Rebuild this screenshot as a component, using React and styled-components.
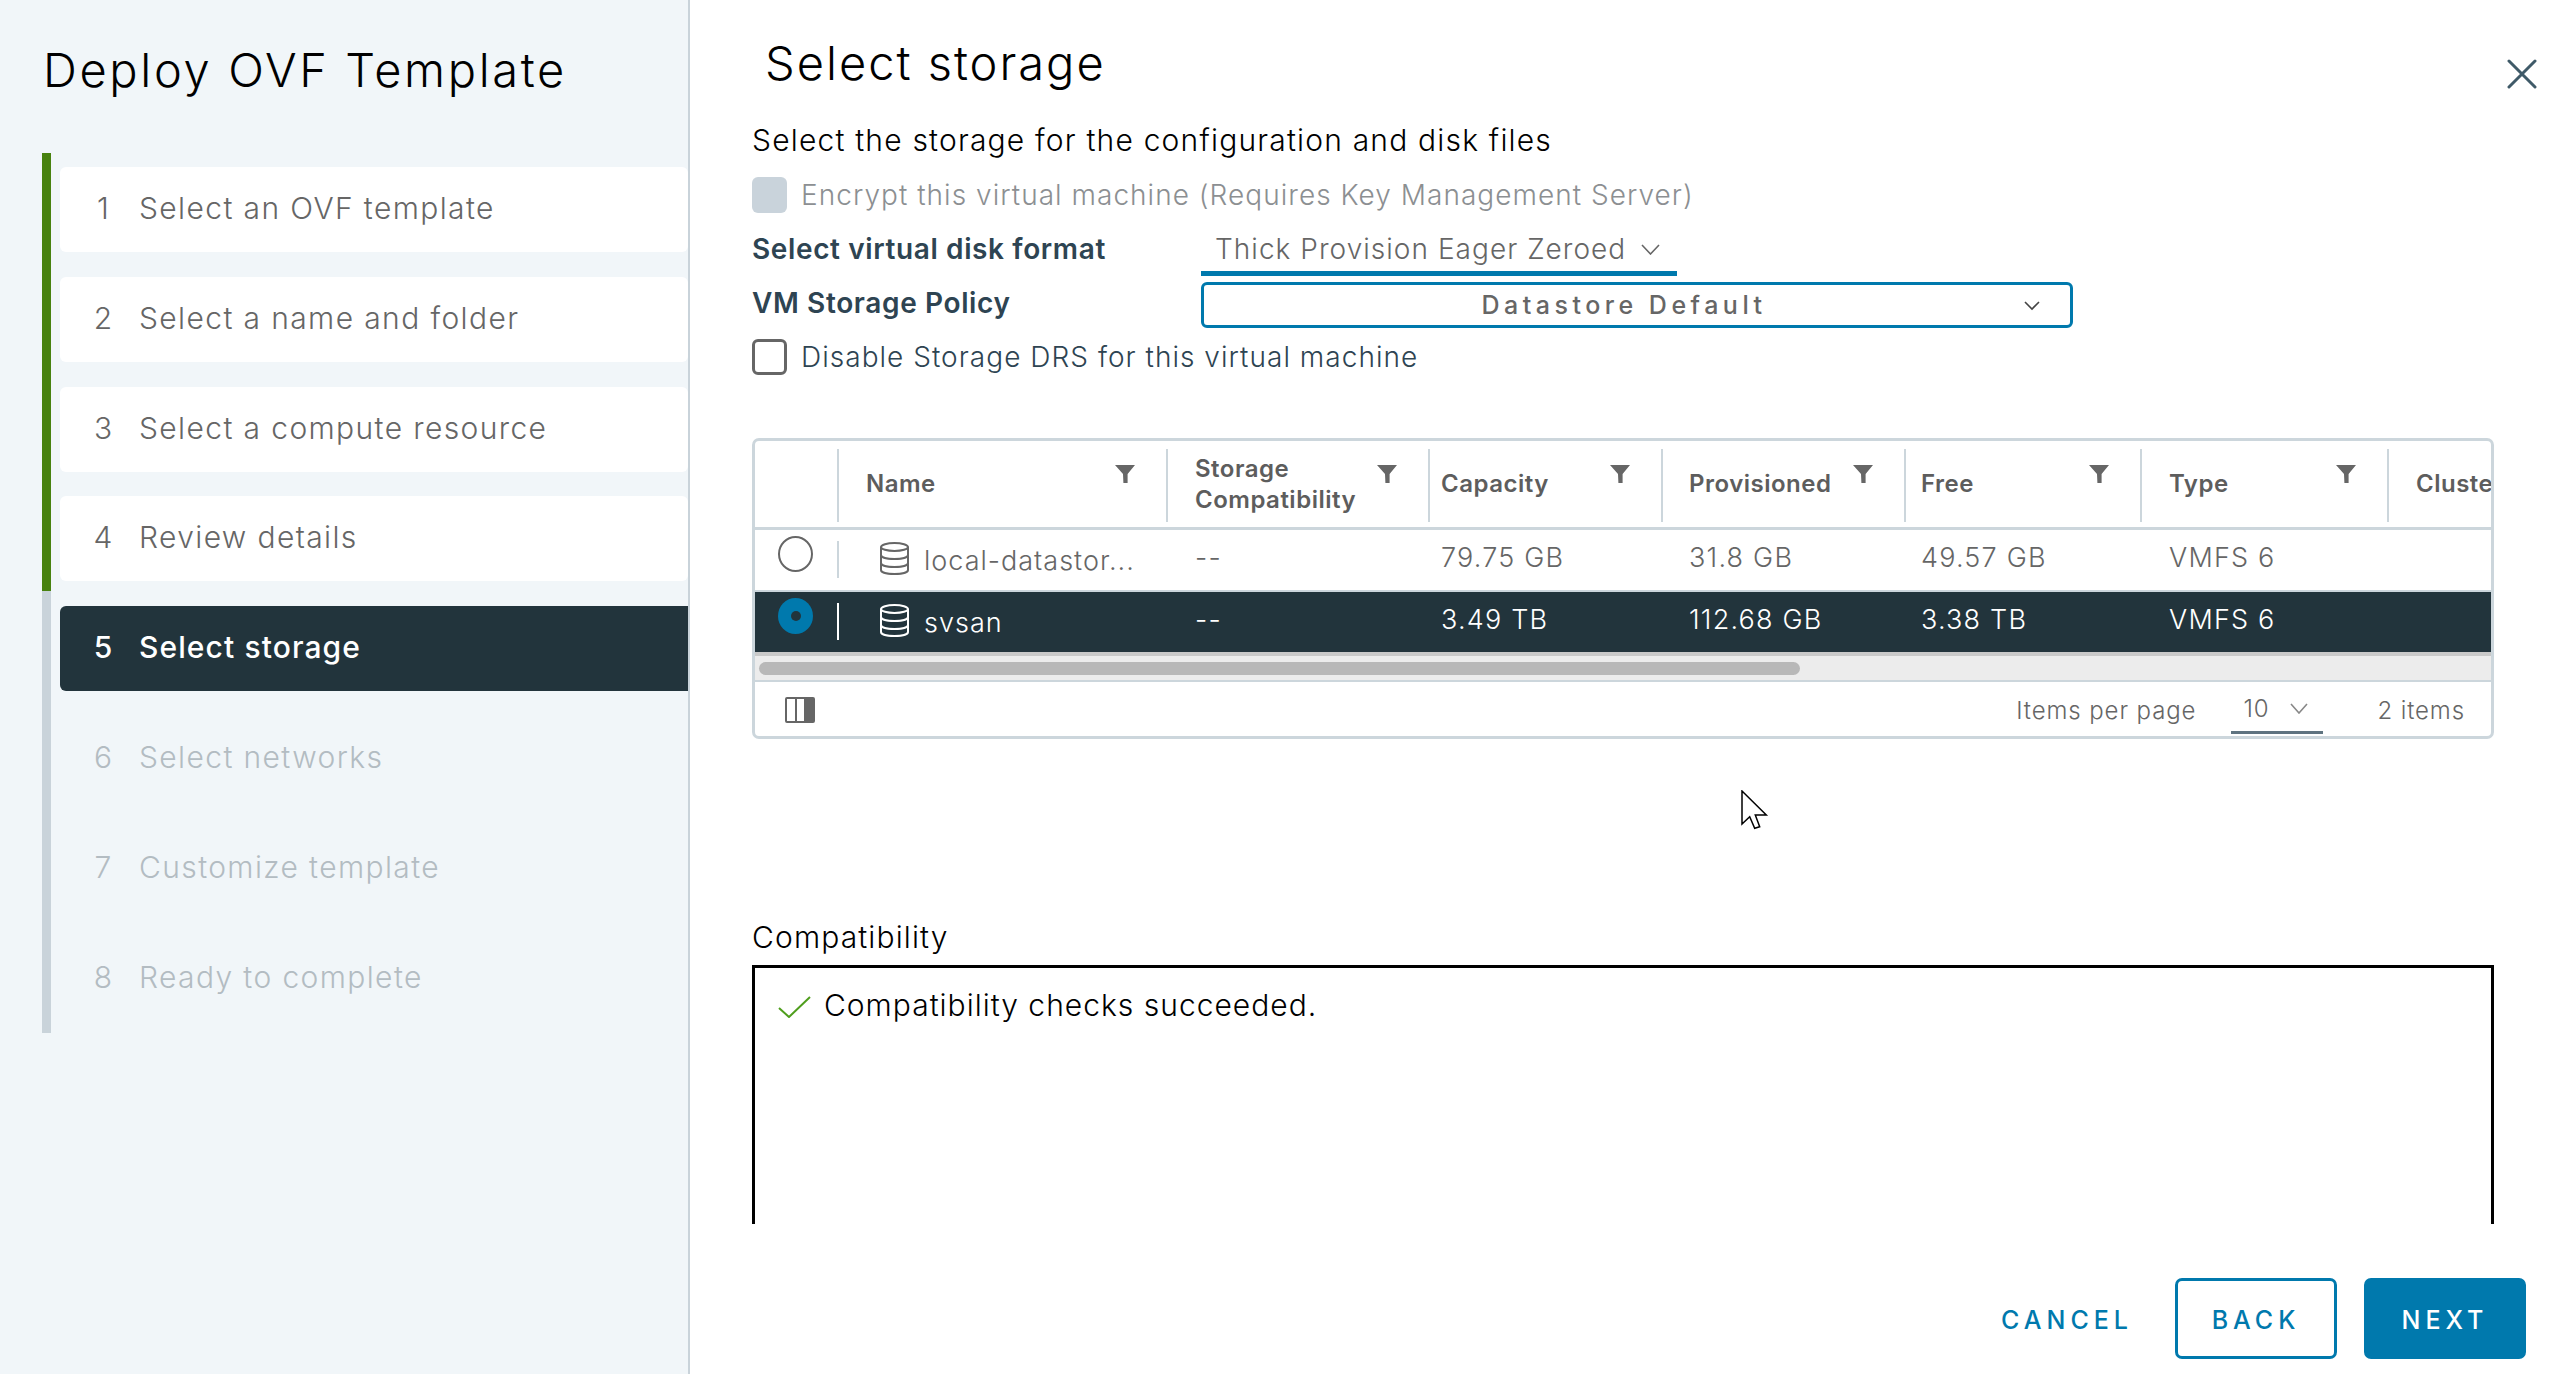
import React from 'react';
import styled, { createGlobalStyle } from 'styled-components';

const Global = createGlobalStyle`
  html, body { margin: 0; padding: 0; background: #fff; }
  * { box-sizing: border-box; }
  body { font-family: Inter, "Open Sans", "Liberation Sans", sans-serif; }
`;

const Page = styled.div`
  position: relative;
  width: 2551px;
  height: 1374px;
  display: flex;
  overflow: hidden;
  background: #fff;
`;

const Sidebar = styled.aside`
  width: 690px;
  flex: none;
  background: #f1f6f9;
  border-right: 2px solid #c9d3da;
  padding-top: 40px;
`;

const SideTitle = styled.h1`
  margin: 0 0 53px 43px;
  font-size: 47px;
  line-height: 60px;
  font-weight: 300;
  letter-spacing: 2.65px;
  color: #000;
`;

const Wizard = styled.div`
  display: flex;
  margin-left: 42px;
`;

const Rail = styled.div`
  width: 9px;
  flex: none;
  margin-right: 9px;
  display: flex;
  flex-direction: column;
`;

const RailPart = styled.div`
  height: ${p => p.$h}px;
  background: ${p => p.$c};
`;

const Steps = styled.ol`
  list-style: none;
  margin: 0;
  padding: 14px 0 0;
  flex: 1;
  display: flex;
  flex-direction: column;
  gap: 24.8px;
`;

const Step = styled.li`
  height: 85px;
  display: flex;
  align-items: center;
  padding: 0 0 3px 30px;
  font-size: 30px;
  letter-spacing: ${p => (p.$state === 'active' ? '1.1px' : '1.38px')};
  border-radius: ${p => (p.$state === 'active' ? '6px 0 0 6px' : '6px')};
  background: ${p => (p.$state === 'active' ? '#22343c' : p.$state === 'done' ? '#fff' : 'transparent')};
  color: ${p => (p.$state === 'active' ? '#fff' : p.$state === 'done' ? '#666' : '#b3bcc2')};
  font-weight: ${p => (p.$state === 'active' ? 500 : 350)};
`;

const StepNum = styled.span`
  width: 26px;
  text-align: center;
  margin-right: 23px;
  letter-spacing: 0;
`;

const Main = styled.main`
  flex: 1;
  min-width: 0;
  padding: 33px 0 0 62px;
`;

const PageTitle = styled.h2`
  margin: 0 0 19px 13px;
  font-size: 47px;
  line-height: 60px;
  font-weight: 300;
  letter-spacing: 2px;
  color: #000;
`;

const Row = styled.div`
  height: 54px;
  display: flex;
  align-items: flex-start;
  font-size: 28px;
  font-weight: 350;
  letter-spacing: 1.03px;
  line-height: 59px;
  color: ${p => p.$c || '#000'};
`;

const IntroRow = styled(Row)`
  font-size: 30px;
  letter-spacing: 1.19px;
  line-height: 57px;
`;

const CheckBox = styled.span`
  width: 35px;
  height: 36px;
  flex: none;
  margin: ${p => p.$top}px 14px 0 0;
  border-radius: 6px;
  background: ${p => (p.$disabled ? '#c9d3db' : '#fff')};
  border: ${p => (p.$disabled ? 'none' : '3px solid #666')};
`;

const FieldLabel = styled.label`
  width: 449px;
  flex: none;
  font-weight: 600;
  letter-spacing: 0.62px;
  color: #2e4452;
`;

const DiskSelect = styled.div`
  width: 476px;
  height: 56px;
  padding-left: 14px;
  display: flex;
  align-items: flex-start;
  border-bottom: 5px solid #0079ad;
  color: #666;
  gap: 15px;
`;

const Chevron = styled.svg`
  flex: none;
  width: ${p => p.$w}px;
  height: 11px;
  margin-top: ${p => p.$top || 0}px;
  fill: none;
  stroke: ${p => p.$c || '#666'};
  stroke-width: 1.6;
`;

const PolicyBox = styled.div`
  width: 872px;
  height: 46px;
  margin-top: 8px;
  padding: 0 30px 0 20px;
  display: flex;
  align-items: center;
  border: 3px solid #0079ad;
  border-radius: 6px;
  font-size: 25px;
  line-height: 40px;
  font-weight: 500;
  letter-spacing: 4.5px;
  color: #666;
`;

const PolicyText = styled.span`
  flex: 1;
  text-align: center;
`;

const DataTable = styled.section`
  width: 1742px;
  height: 301px;
  margin-top: 56px;
  border: 3px solid #ccd6dc;
  border-radius: 7px;
  overflow: hidden;
`;

const GridRow = styled.div`
  display: grid;
  grid-template-columns: 82px 329px 262px 233px 243px 236px 247px 1fr;
`;

const HeadRow = styled(GridRow)`
  height: 89px;
  padding: 8px 0 5px;
  border-bottom: 3px solid #ccd6dc;
`;

const HeadCell = styled.div`
  display: flex;
  justify-content: space-between;
  align-items: center;
  padding: 0 31px 4px ${p => p.$inset}px;
  border-left: 2px solid #ccd6dc;
  font-size: 24px;
  line-height: 31px;
  font-weight: 600;
  letter-spacing: 0.5px;
  color: #5d5d5d;
  white-space: nowrap;
  overflow: hidden;
`;

const Filter = styled.svg`
  width: 20px;
  height: 18px;
  flex: none;
  align-self: flex-start;
  margin-top: 16px;
  fill: #666;
`;

const BodyRow = styled(GridRow)`
  height: ${p => p.$h}px;
  background: ${p => (p.$selected ? '#22343c' : '#fff')};
  color: ${p => (p.$selected ? '#fff' : '#666')};
  border-bottom: ${p => (p.$selected ? '4px solid #c9c9c9' : '2px solid #ccd6dc')};
  font-size: 27px;
  font-weight: 350;
  letter-spacing: 1.2px;
`;

const SelectCell = styled.div`
  display: flex;
  padding-left: 23px;
`;

const Radio = styled.span`
  width: 35px;
  height: 36px;
  margin-top: 6px;
  flex: none;
  border-radius: 50%;
  display: flex;
  align-items: center;
  justify-content: center;
  background: ${p => (p.$checked ? '#0079ad' : '#fff')};
  border: ${p => (p.$checked ? 'none' : '2px solid #666')};
`;

const RadioDot = styled.span`
  width: 10px;
  height: 10px;
  border-radius: 50%;
  background: #22343c;
`;

const RowDivider = styled.span`
  width: 2px;
  height: 37px;
  margin: 11px 0 0 auto;
  background: ${p => (p.$selected ? '#fff' : '#ccd6dc')};
  position: relative;
  left: 2px;
`;

const NameCell = styled.div`
  display: flex;
  align-items: center;
  gap: 14px;
  padding-left: 42px;
  white-space: nowrap;
  letter-spacing: 1px;
`;

const DbIcon = styled.svg`
  width: 31px;
  height: 33px;
  flex: none;
  margin-top: -4px;
  fill: none;
  stroke: currentColor;
  stroke-width: 2;
`;

const ValueCell = styled.div`
  display: flex;
  align-items: center;
  padding: 0 0 5px ${p => p.$inset}px;
  white-space: nowrap;
`;

const ScrollTrack = styled.div`
  height: 26px;
  padding: 6px 0 0 4px;
  background: #ececec;
  border-bottom: 2px solid #ccd6dc;
`;

const ScrollThumb = styled.div`
  width: 1041px;
  height: 13px;
  border-radius: 7px;
  background: #b8b8b8;
`;

const TableFooter = styled.div`
  height: 52px;
  padding: 4px 26px 0 30px;
  display: flex;
  align-items: center;
  font-size: 24px;
  font-weight: 350;
  letter-spacing: 0.9px;
  color: #666;
`;

const ColumnIcon = styled.svg`
  width: 30px;
  height: 26px;
  flex: none;
  margin-right: auto;
`;

const Pager = styled.div`
  width: 92px;
  height: 48px;
  margin: 0 54px 0 35px;
  padding-left: 12px;
  display: flex;
  align-items: center;
  gap: 21px;
  align-self: flex-start;
  border-bottom: 3px solid #5f7380;
`;

const SectionLabel = styled.div`
  margin-top: 180px;
  font-size: 30px;
  font-weight: 350;
  line-height: 36px;
  letter-spacing: 1.13px;
  color: #000;
`;

const CompatBox = styled.div`
  width: 1742px;
  height: 259px;
  margin-top: 10px;
  padding: 19px 0 0 23px;
  border: 3px solid #000;
  border-bottom: none;
  display: flex;
  align-items: flex-start;
  gap: 13px;
  font-size: 30px;
  font-weight: 350;
  line-height: 36px;
  letter-spacing: 1px;
  color: #000;
`;

const CheckIcon = styled.svg`
  width: 33px;
  height: 22px;
  flex: none;
  margin-top: 9px;
  fill: none;
  stroke: #4f9e1d;
  stroke-width: 2;
`;

const Actions = styled.div`
  display: flex;
  justify-content: flex-end;
  align-items: center;
  margin-top: 54px;
  padding-right: 25px;
  gap: 27px;
`;

const Button = styled.button`
  width: ${p => (p.$variant === 'link' ? 'auto' : '162px')};
  height: 81px;
  margin-right: ${p => (p.$variant === 'link' ? '15px' : '0')};
  padding: 2px 0 0;
  font-family: inherit;
  font-size: 25px;
  font-weight: 500;
  letter-spacing: 5px;
  border-radius: 7px;
  border: ${p => (p.$variant === 'link' ? 'none' : '3px solid #0079ad')};
  background: ${p => (p.$variant === 'primary' ? '#0079ad' : '#fff')};
  color: ${p => (p.$variant === 'primary' ? '#fff' : '#0079ad')};
`;

const CloseIcon = styled.svg`
  position: absolute;
  left: 2507px;
  top: 59px;
  width: 30px;
  height: 30px;
  stroke: #3f5a68;
  stroke-width: 3;
  stroke-linecap: round;
`;

const Cursor = styled.svg`
  position: absolute;
  left: 1741px;
  top: 790px;
  width: 28px;
  height: 40px;
  fill: #fff;
  stroke: #000;
  stroke-width: 1.5;
`;

const steps = [
  ['1', 'Select an OVF template', 'done'],
  ['2', 'Select a name and folder', 'done'],
  ['3', 'Select a compute resource', 'done'],
  ['4', 'Review details', 'done'],
  ['5', 'Select storage', 'active'],
  ['6', 'Select networks', 'todo'],
  ['7', 'Customize template', 'todo'],
  ['8', 'Ready to complete', 'todo'],
];

const heads = [
  { label: 'Name', inset: 27, filter: true },
  { label: <>Storage<br />Compatibility</>, inset: 27, filter: true },
  { label: 'Capacity', inset: 11, filter: true },
  { label: 'Provisioned', inset: 26, filter: true },
  { label: 'Free', inset: 15, filter: true },
  { label: 'Type', inset: 27, filter: true },
  { label: 'Cluster', inset: 27, filter: false },
];

const insets = [29, 13, 28, 17, 29];

const rows = [
  { name: 'local-datastor...', vals: ['--', '79.75 GB', '31.8 GB', '49.57 GB', 'VMFS 6'], h: 62 },
  { name: 'svsan', vals: ['--', '3.49 TB', '112.68 GB', '3.38 TB', 'VMFS 6'], h: 64, selected: true },
];

const FilterGlyph = () => (
  <Filter viewBox="0 0 20 18"><path d="M0 0H20L12.6 9V18H8.4L8 9Z" /></Filter>
);

const Db = () => (
  <DbIcon viewBox="0 0 31 33">
    <ellipse cx="15.5" cy="5" rx="13.5" ry="4" />
    <path d="M2 5V28C2 30.5 8 32 15.5 32S29 30.5 29 28V5" />
    <path d="M2 13C2 15.5 8 17 15.5 17S29 15.5 29 13" />
    <path d="M2 21C2 23.5 8 25 15.5 25S29 23.5 29 21" />
  </DbIcon>
);

export default function App() {
  return (
    <Page>
      <Global />
      <Sidebar>
        <SideTitle>Deploy OVF Template</SideTitle>
        <Wizard>
          <Rail>
            <RailPart $h={438} $c="#48820f" />
            <RailPart $h={442} $c="#c9d3da" />
          </Rail>
          <Steps>
            {steps.map(([n, t, s]) => (
              <Step key={n} $state={s}><StepNum>{n}</StepNum>{t}</Step>
            ))}
          </Steps>
        </Wizard>
      </Sidebar>
      <Main>
        <PageTitle>Select storage</PageTitle>
        <IntroRow>Select the storage for the configuration and disk files</IntroRow>
        <Row $c="#8c8f92"><CheckBox $disabled $top={11} />Encrypt this virtual machine (Requires Key Management Server)</Row>
        <Row>
          <FieldLabel>Select virtual disk format</FieldLabel>
          <DiskSelect>
            Thick Provision Eager Zeroed
            <Chevron $w={19} $top={24} viewBox="0 0 19 11"><path d="M1 1L9.5 10L18 1" /></Chevron>
          </DiskSelect>
        </Row>
        <Row>
          <FieldLabel>VM Storage Policy</FieldLabel>
          <PolicyBox>
            <PolicyText>Datastore Default</PolicyText>
            <Chevron $w={16} viewBox="0 0 16 11" $c="#444"><path d="M1 2L8 9L15 2" /></Chevron>
          </PolicyBox>
        </Row>
        <Row $c="#2e4452"><CheckBox $top={11} />Disable Storage DRS for this virtual machine</Row>

        <DataTable>
          <HeadRow>
            <div />
            {heads.map((h, i) => (
              <HeadCell key={i} $inset={h.inset}>
                <span>{h.label}</span>
                {h.filter && <FilterGlyph />}
              </HeadCell>
            ))}
          </HeadRow>
          {rows.map(r => (
            <BodyRow key={r.name} $h={r.h} $selected={r.selected}>
              <SelectCell>
                <Radio $checked={r.selected}>{r.selected && <RadioDot />}</Radio>
                <RowDivider $selected={r.selected} />
              </SelectCell>
              <NameCell><Db />{r.name}</NameCell>
              {r.vals.map((v, i) => (
                <ValueCell key={i} $inset={insets[i]}>{v}</ValueCell>
              ))}
            </BodyRow>
          ))}
          <ScrollTrack><ScrollThumb /></ScrollTrack>
          <TableFooter>
            <ColumnIcon viewBox="0 0 30 26">
              <rect x="1" y="1" width="28" height="24" fill="#fff" stroke="#666" strokeWidth="2" rx="1" />
              <rect x="10" y="1" width="2" height="24" fill="#666" />
              <rect x="19" y="1" width="10" height="24" fill="#666" />
            </ColumnIcon>
            <span>Items per page</span>
            <Pager>
              10
              <Chevron $w={18} viewBox="0 0 18 11" $c="#888"><path d="M1 1L9 10L17 1" /></Chevron>
            </Pager>
            <span>2 items</span>
          </TableFooter>
        </DataTable>

        <SectionLabel>Compatibility</SectionLabel>
        <CompatBox>
          <CheckIcon viewBox="0 0 33 22"><path d="M1 12L11 21L32 1" /></CheckIcon>
          Compatibility checks succeeded.
        </CompatBox>

        <Actions>
          <Button $variant="link">CANCEL</Button>
          <Button>BACK</Button>
          <Button $variant="primary">NEXT</Button>
        </Actions>
      </Main>
      <CloseIcon viewBox="0 0 30 30"><path d="M2 2L28 28M28 2L2 28" /></CloseIcon>
      <Cursor viewBox="0 0 28 40"><path d="M1 1L25.3 25H14.3L18.7 36.7L13.7 38.3L8.7 26.7L1 34Z" /></Cursor>
    </Page>
  );
}
